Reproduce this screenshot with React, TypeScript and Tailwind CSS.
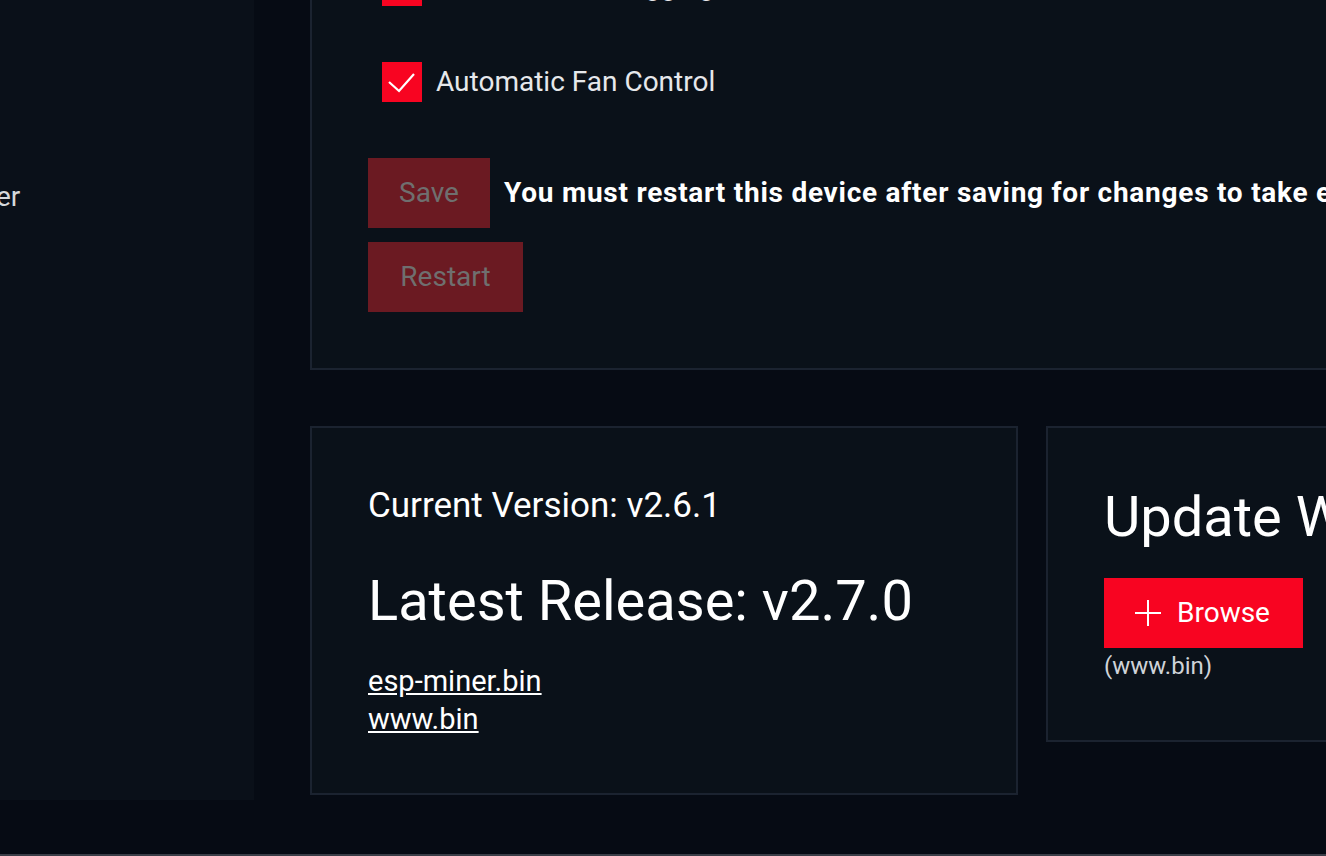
export default function App() {
  const font = { fontFamily: "Roboto, 'Liberation Sans', sans-serif" };
  return (
    <div className="h-[856px] w-[1326px] overflow-hidden bg-[#060b14] flex flex-col" style={font}>
      <div className="flex-1 flex items-start overflow-hidden">
        {/* Sidebar */}
        <aside className="w-[254px] h-[800px] shrink-0 bg-[#0a1019] overflow-hidden">
          <div className="mt-[178px] -ml-[4px] text-[28px] leading-[38px] text-[#d6d8dc]">er</div>
        </aside>

        {/* Main */}
        <main className="pl-[56px] shrink-0 w-[1499px] flex flex-col gap-[56px]">
          {/* Settings card */}
          <section className="border-2 border-t-0 border-[#1b2330] bg-[#0a1119] px-[56px] pb-[56px] -mt-[34px]">
            <div className="flex flex-col gap-[56px] ml-[14px]">
              <label className="flex items-center gap-[14px] h-[40px]">
                <span className="w-[40px] h-[40px] bg-[#f80421] flex items-center justify-center">
                  <svg width="40" height="40" viewBox="0 0 40 40">
                    <polyline points="7,20 17,29 32,12" fill="none" stroke="white" strokeWidth="2.2" />
                  </svg>
                </span>
                <span className="text-[28px] text-[#e6e8eb]">Enable Status Logging</span>
              </label>
              <label className="flex items-center gap-[14px] h-[40px]">
                <span className="w-[40px] h-[40px] bg-[#f80421] flex items-center justify-center">
                  <svg width="40" height="40" viewBox="0 0 40 40">
                    <polyline points="7,20 17,29 32,12" fill="none" stroke="white" strokeWidth="2.2" />
                  </svg>
                </span>
                <span className="text-[28px] text-[#e6e8eb]">Automatic Fan Control</span>
              </label>
            </div>

            <div className="mt-[56px] flex items-center gap-[14px]">
              <button className="w-[122px] h-[70px] bg-[#6b1a22] text-[#6f6f6f] text-[28px]">Save</button>
              <span className="text-[28px] font-bold tracking-[0.75px] text-white whitespace-nowrap">
                You must restart this device after saving for changes to take effect.
              </span>
            </div>
            <div className="mt-[14px]">
              <button className="w-[155px] h-[70px] bg-[#6b1a22] text-[#6f6f6f] text-[28px]">Restart</button>
            </div>
          </section>

          {/* Version cards */}
          <div className="grid grid-cols-[708px_708px] gap-[28px] items-start">
            <section className="border-2 border-[#1b2330] bg-[#0a1119] p-[56px] h-[369px]">
              <div className="text-[35px] leading-[44px] text-white">Current Version: v2.6.1</div>
              <div className="mt-[41px] text-[56px] leading-[64px] text-white">Latest Release: v2.7.0</div>
              <div className="mt-[29px] flex flex-col text-[29px] leading-[38px] text-white">
                <a className="underline self-start">esp-miner.bin</a>
                <a className="underline self-start">www.bin</a>
              </div>
            </section>

            <section className="border-2 border-[#1b2330] bg-[#0a1119] p-[56px]">
              <div className="text-[56px] leading-[66px] text-white whitespace-nowrap">Update Website</div>
              <button className="mt-[28px] h-[70px] w-[199px] pl-[30px] bg-[#f80421] text-white text-[28px] flex items-center gap-[15px]">
                <svg width="28" height="28" viewBox="0 0 28 28">
                  <line x1="14" y1="1" x2="14" y2="27" stroke="white" strokeWidth="2" />
                  <line x1="1" y1="14" x2="27" y2="14" stroke="white" strokeWidth="2" />
                </svg>
                Browse
              </button>
              <div className="text-[24px] leading-[36px] text-[#cfd3d8]">(www.bin)</div>
            </section>
          </div>
        </main>
      </div>
      <div className="h-[2px] bg-[#3a3e48]" />
    </div>
  );
}
